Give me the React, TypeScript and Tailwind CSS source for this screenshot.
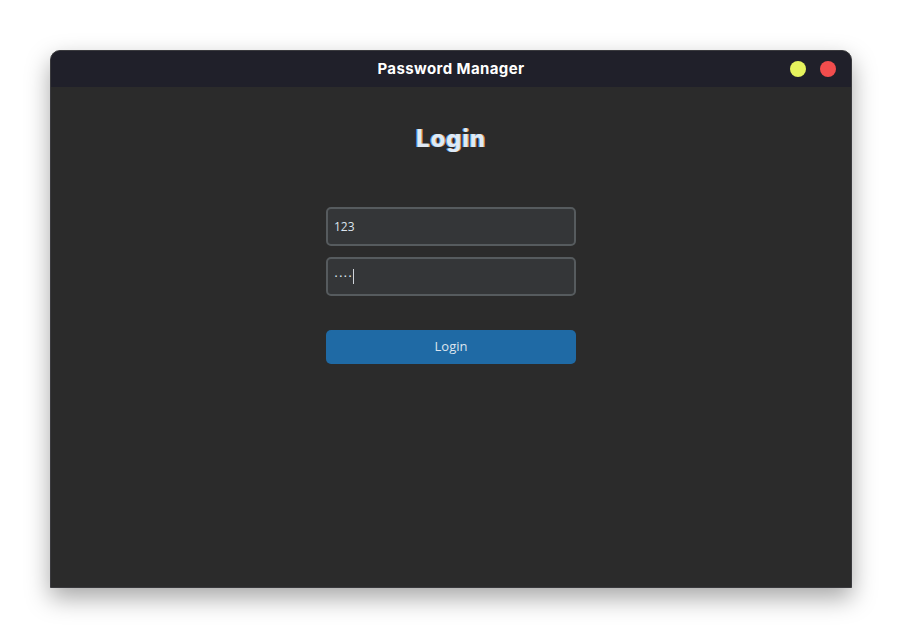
export default function App() {
  return (
    <div className="w-[902px] h-[638px] bg-white pt-[50px] pl-[50px] font-['Inter','Open_Sans',sans-serif]">
      {/* Window */}
      <div className="w-[802px] h-[538px] flex flex-col rounded-t-[10px] bg-[#2b2b2b] border border-[#3a3a3e] shadow-[0_10px_24px_rgba(0,0,0,0.35)] overflow-hidden">
        {/* Title bar */}
        <div className="relative h-[36px] flex items-center justify-center bg-[#20202a]">
          <span className="text-white text-[15px] font-bold tracking-[0.4px]">Password Manager</span>
          <div className="absolute right-[15px] top-[10px] flex gap-[14px]">
            <div className="w-[16px] h-[16px] rounded-full bg-[#e6f35d]" />
            <div className="w-[16px] h-[16px] rounded-full bg-[#f24d4d]" />
          </div>
        </div>

        {/* Body */}
        <div className="flex-1 flex flex-col items-center pt-[37px]">
          <h1 className="h-[30px] leading-[30px] text-[24px] font-extrabold tracking-[0.8px] text-[#dfe9f5] [text-shadow:-1px_0_#4f9be0,1px_0_#d88a4a]">
            Login
          </h1>

          <div className="mt-[53px] flex flex-col gap-[11px]">
            <div className="w-[250px] h-[39px] flex items-center px-[6px] rounded-[5px] border-2 border-[#565b5e] bg-[#343638]">
              <span className="text-[12px] text-[#dce4ee] font-['Open_Sans',sans-serif]">123</span>
            </div>
            <div className="w-[250px] h-[39px] flex items-center px-[6px] rounded-[5px] border-2 border-[#565b5e] bg-[#343638]">
              <span className="text-[13px] text-[#dce4ee] tracking-[0.5px] font-['DejaVu_Sans',sans-serif]">····</span>
              <span className="w-[1px] h-[15px] bg-[#cfd4da]" />
            </div>
          </div>

          <button className="mt-[34px] w-[250px] h-[34px] rounded-[5px] bg-[#1f6aa5] text-[13px] text-[#dce4ee] font-['Open_Sans',sans-serif]">
            Login
          </button>
        </div>
      </div>
    </div>
  )
}
